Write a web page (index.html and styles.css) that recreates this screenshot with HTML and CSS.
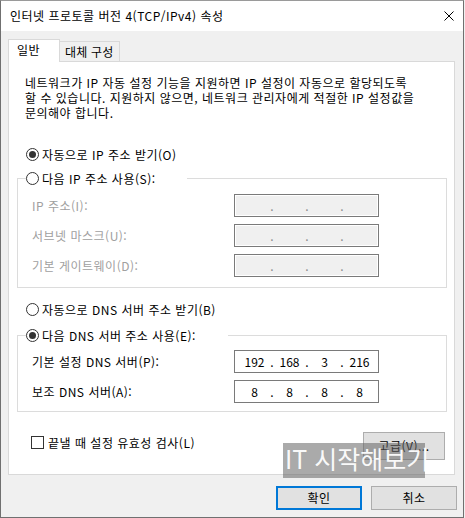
FILE: index.html
```html
<!DOCTYPE html>
<html lang="ko">
<head>
<meta charset="utf-8">
<title>인터넷 프로토콜 버전 4(TCP/IPv4) 속성</title>
<link rel="stylesheet" href="styles.css">
</head>
<body>
<div class="window">
  <div class="titlebar">
    <span class="title">인터넷 프로토콜 버전 4(TCP/IPv4) 속성</span>
    <svg class="close" width="10" height="10" viewBox="0 0 10 10"><path d="M0.5 0.5 L9.5 9.5 M9.5 0.5 L0.5 9.5" stroke="#000" stroke-width="1" fill="none"/></svg>
  </div>
  <div class="content">
    <div class="tabs">
      <div class="tab active">일반</div>
      <div class="tab inactive">대체 구성</div>
    </div>
    <div class="panel">
      <p class="desc">네트워크가 IP 자동 설정 기능을 지원하면 IP 설정이 자동으로 할당되도록<br>할 수 있습니다. 지원하지 않으면, 네트워크 관리자에게 적절한 IP 설정값을<br>문의해야 합니다.</p>

      <div class="radio-row r1"><span class="radio checked"></span><span>자동으로 IP 주소 받기(O)</span></div>

      <fieldset class="group g1">
        <legend class="legend l1"><span class="radio"></span><span>다음 IP 주소 사용(S):</span></legend>
        <div class="field-row disabled">
          <span class="field-label">IP 주소(I):</span>
          <div class="ipbox off"><span class="seg"></span><span class="dot">.</span><span class="seg"></span><span class="dot">.</span><span class="seg"></span><span class="dot">.</span><span class="seg"></span></div>
        </div>
        <div class="field-row disabled">
          <span class="field-label">서브넷 마스크(U):</span>
          <div class="ipbox off"><span class="seg"></span><span class="dot">.</span><span class="seg"></span><span class="dot">.</span><span class="seg"></span><span class="dot">.</span><span class="seg"></span></div>
        </div>
        <div class="field-row disabled">
          <span class="field-label">기본 게이트웨이(D):</span>
          <div class="ipbox off"><span class="seg"></span><span class="dot">.</span><span class="seg"></span><span class="dot">.</span><span class="seg"></span><span class="dot">.</span><span class="seg"></span></div>
        </div>
      </fieldset>

      <div class="radio-row r3"><span class="radio"></span><span>자동으로 DNS 서버 주소 받기(B)</span></div>

      <fieldset class="group g2">
        <legend class="legend l2"><span class="radio checked"></span><span>다음 DNS 서버 주소 사용(E):</span></legend>
        <div class="field-row">
          <span class="field-label">기본 설정 DNS 서버(P):</span>
          <div class="ipbox"><span class="seg">192</span><span class="dot">.</span><span class="seg">168</span><span class="dot">.</span><span class="seg">3</span><span class="dot">.</span><span class="seg">216</span></div>
        </div>
        <div class="field-row">
          <span class="field-label">보조 DNS 서버(A):</span>
          <div class="ipbox"><span class="seg">8</span><span class="dot">.</span><span class="seg">8</span><span class="dot">.</span><span class="seg">8</span><span class="dot">.</span><span class="seg">8</span></div>
        </div>
      </fieldset>

      <div class="bottom-row">
        <div class="check-row"><span class="checkbox"></span><span>끝낼 때 설정 유효성 검사(L)</span></div>
        <button class="btn adv">고급(V)...</button>
      </div>
    </div>
    <div class="actions">
      <button class="btn ok">확인</button>
      <button class="btn">취소</button>
    </div>
  </div>
  <div class="watermark">IT 시작해보기</div>
</div>
</body>
</html>
```

FILE: styles.css
```css
* { box-sizing: border-box; }
html, body { margin: 0; padding: 0; }
body {
  width: 465px;
  height: 518px;
  overflow: hidden;
  background: #f0f0f0;
  font-family: "Noto Sans CJK KR", "Noto Sans", sans-serif;
  font-size: 12px;
  letter-spacing: 0.5px;
  color: #000;
}
.window {
  position: relative;
  width: 464px;
  height: 518px;
  border: 1px solid #707070;
  border-top-color: #9a9a9a;
  background: #f0f0f0;
}
.titlebar {
  height: 30px;
  background: #fff;
  display: flex;
  align-items: center;
  padding-left: 9px;
}
.title { line-height: 16px; white-space: nowrap; }
.close { margin-left: auto; margin-right: 9px; display: block; }

.content { padding: 8px 8px 0 7px; }

.tabs { display: flex; align-items: flex-end; }
.tab {
  line-height: 16px;
  border: 1px solid #d9d9d9;
  white-space: nowrap;
}
.tab.active {
  width: 52px;
  height: 23px;
  padding: 2px 0 0 8px;
  background: #fff;
  border-bottom: none;
  margin-bottom: -1px;
  position: relative;
  z-index: 1;
}
.tab.inactive {
  width: 60px;
  height: 20px;
  padding: 2px 0 0 5px;
  border-left: none;
  border-bottom: none;
  background: #f0f0f0;
  letter-spacing: 0.2px;
}

.panel {
  width: 447px;
  height: 414px;
  border: 1px solid #d9d9d9;
  background: #fff;
  padding: 0 0 0 8px;
}
.desc {
  margin: 13px 0 0 8px;
  line-height: 15px;
  white-space: nowrap;
}

.radio-row {
  display: flex;
  align-items: center;
  height: 18px;
  margin-left: 9px;
  white-space: nowrap;
}
.r1 { margin-top: 25px; }
.r3 { margin-top: 12px; }

.radio {
  position: relative;
  display: inline-block;
  width: 13px;
  height: 13px;
  border: 1px solid #333;
  border-radius: 50%;
  background: #fff;
  margin-right: 3px;
  flex: none;
}
.radio.checked::after {
  content: "";
  position: absolute;
  left: 2px;
  top: 2px;
  width: 7px;
  height: 7px;
  border-radius: 50%;
  background: #333;
}

.group {
  width: 430px;
  min-width: 0;
  margin: 0;
  border: 1px solid #dcdcdc;
}
.g1 { margin-top: 6px; padding: 7px 0 10px 8px; }
.g2 { margin-top: 8px; padding: 6px 0 8px 8px; }

.legend {
  padding: 0;
  height: 18px;
  display: flex;
  align-items: center;
  white-space: nowrap;
  background: #fff;
}
.l1 { width: 161px; }
.l2 { width: 202px; }

.field-row {
  display: flex;
  align-items: center;
  height: 23px;
  margin-left: 6px;
  white-space: nowrap;
}
.field-row + .field-row { margin-top: 7px; }
.field-label { width: 202px; line-height: 16px; }
.field-row.disabled .field-label { color: #a0a0a0; }

.ipbox {
  display: flex;
  width: 145px;
  height: 23px;
  border: 1px solid #7a7a7a;
  background: #fff;
  padding-left: 5px;
  line-height: 21px;
  letter-spacing: 0;
}
.ipbox.off {
  background: #f0f0f0;
  box-shadow: inset 0 0 0 1px #fff;
  color: #8a8a8a;
}
.seg { width: 29px; text-align: center; }
.dot { width: 6px; text-align: center; }

.bottom-row {
  display: flex;
  align-items: flex-start;
  width: 430px;
  margin-top: 20px;
}
.check-row {
  display: flex;
  align-items: center;
  height: 16px;
  margin: 2px 0 0 14px;
  white-space: nowrap;
}
.checkbox {
  display: inline-block;
  width: 13px;
  height: 13px;
  border: 1px solid #333;
  background: #fff;
  margin-right: 4px;
  flex: none;
}

.btn {
  font-family: "Noto Sans CJK KR", "Noto Sans", sans-serif;
  font-size: 12px;
  letter-spacing: 0.5px;
  color: #000;
  background: #e1e1e1;
  border: 1px solid #adadad;
  padding: 0;
  line-height: 16px;
}
.btn.adv {
  margin-left: auto;
  margin-right: 2px;
  width: 82px;
  height: 28px;
}
.actions {
  display: flex;
  justify-content: flex-end;
  gap: 9px;
  margin-top: 11px;
  margin-right: -2px;
}
.actions .btn { width: 86px; height: 24px; }
.btn.ok { border: 2px solid #0078d7; }

.watermark {
  position: absolute;
  left: 282px;
  top: 442px;
  width: 142px;
  height: 35px;
  background: rgba(100, 100, 100, 0.55);
  color: rgba(255, 255, 255, 0.95);
  font-size: 25px;
  letter-spacing: 0;
  line-height: 31px;
  padding-left: 2px;
  white-space: nowrap;
}
```
